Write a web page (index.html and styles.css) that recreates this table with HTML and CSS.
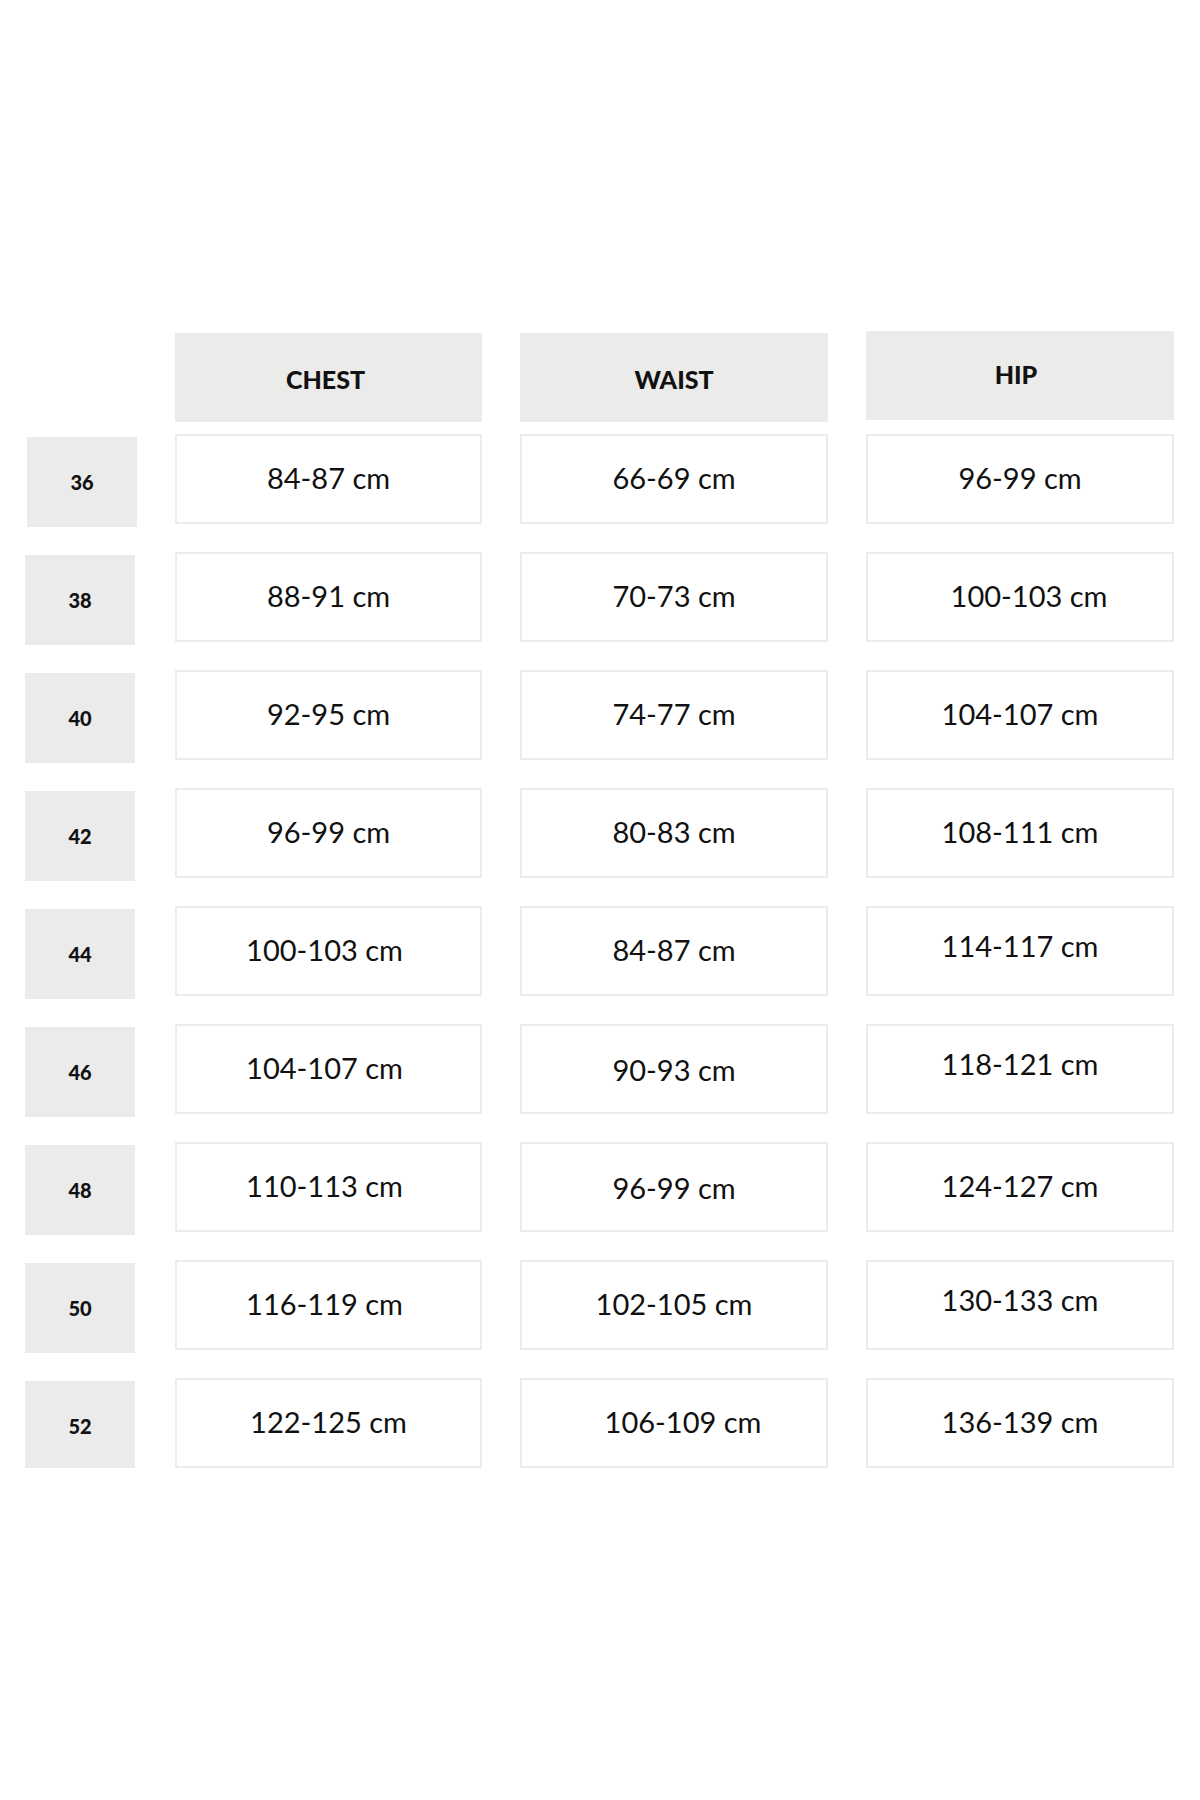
FILE: index.html
```html
<!DOCTYPE html>
<html lang="en">
<head>
<meta charset="utf-8">
<title>Size chart</title>
<link rel="stylesheet" href="styles.css">
</head>
<body>
<div class="chart">
  <div class="grid grid-head">
    <div class="corner"></div>
    <div class="head"><span class="nudge-hl">CHEST</span></div>
    <div class="head">WAIST</div>
    <div class="head head-hip"><span class="nudge-hl2">HIP</span></div>
  </div>

  <div class="grid grid-body">
    <div class="size size-first">36</div>
    <div class="cell">84-87 cm</div>
    <div class="cell">66-69 cm</div>
    <div class="cell">96-99 cm</div>

    <div class="size">38</div>
    <div class="cell">88-91 cm</div>
    <div class="cell">70-73 cm</div>
    <div class="cell"><span class="nudge-r">100-103 cm</span></div>

    <div class="size">40</div>
    <div class="cell">92-95 cm</div>
    <div class="cell">74-77 cm</div>
    <div class="cell">104-107 cm</div>

    <div class="size">42</div>
    <div class="cell">96-99 cm</div>
    <div class="cell">80-83 cm</div>
    <div class="cell">108-111 cm</div>

    <div class="size">44</div>
    <div class="cell"><span class="nudge-l">100-103 cm</span></div>
    <div class="cell">84-87 cm</div>
    <div class="cell"><span class="nudge-up">114-117 cm</span></div>

    <div class="size">46</div>
    <div class="cell"><span class="nudge-l">104-107 cm</span></div>
    <div class="cell"><span class="nudge-down">90-93 cm</span></div>
    <div class="cell"><span class="nudge-up">118-121 cm</span></div>

    <div class="size">48</div>
    <div class="cell"><span class="nudge-l">110-113 cm</span></div>
    <div class="cell"><span class="nudge-down">96-99 cm</span></div>
    <div class="cell">124-127 cm</div>

    <div class="size">50</div>
    <div class="cell"><span class="nudge-l">116-119 cm</span></div>
    <div class="cell">102-105 cm</div>
    <div class="cell"><span class="nudge-up">130-133 cm</span></div>

    <div class="size">52</div>
    <div class="cell">122-125 cm</div>
    <div class="cell"><span class="nudge-r">106-109 cm</span></div>
    <div class="cell">136-139 cm</div>
  </div>
</div>
</body>
</html>
```
FILE: styles.css
```css
html, body {
  margin: 0;
  padding: 0;
  background: #ffffff;
}

body {
  font-family: Lato, "Open Sans", "Liberation Sans", sans-serif;
  color: #111111;
}

.chart {
  padding: 333px 0 0 26px;
}

.grid {
  display: grid;
  grid-template-columns: 110px 307px 308px 308px;
  column-gap: 38px;
}

.grid-head {
  grid-template-rows: 89px;
  margin-bottom: 12px;
  margin-left: 1px;
}

.grid-body {
  grid-auto-rows: 90px;
  row-gap: 28px;
  margin-left: 1px;
}

.head {
  background: #ebebea;
  display: flex;
  align-items: center;
  justify-content: center;
  font-weight: 900;
  font-size: 25px;
  padding-top: 3px;
  box-sizing: border-box;
}

.head-hip {
  margin-top: -2px;
  margin-bottom: 2px;
  padding-top: 0;
  padding-bottom: 4px;
}

.size {
  background: #ebebea;
  display: flex;
  align-items: center;
  justify-content: center;
  font-weight: 900;
  font-size: 20px;
  margin-top: 3px;
  margin-bottom: -3px;
  margin-left: -2px;
  margin-right: 2px;
}

.size-first {
  margin-left: 0;
  margin-right: 0;
}

.cell {
  border: 2px solid #ececec;
  box-sizing: border-box;
  display: flex;
  align-items: center;
  justify-content: center;
  font-size: 29px;
  padding-bottom: 4px;
}

.nudge-hl {
  position: relative;
  left: -3px;
}

.nudge-hl2 {
  position: relative;
  left: -4px;
}

.nudge-r {
  position: relative;
  left: 9px;
}

.nudge-l {
  position: relative;
  left: -4px;
}

.nudge-up {
  position: relative;
  top: -4px;
}

.nudge-down {
  position: relative;
  top: 2px;
}
```
